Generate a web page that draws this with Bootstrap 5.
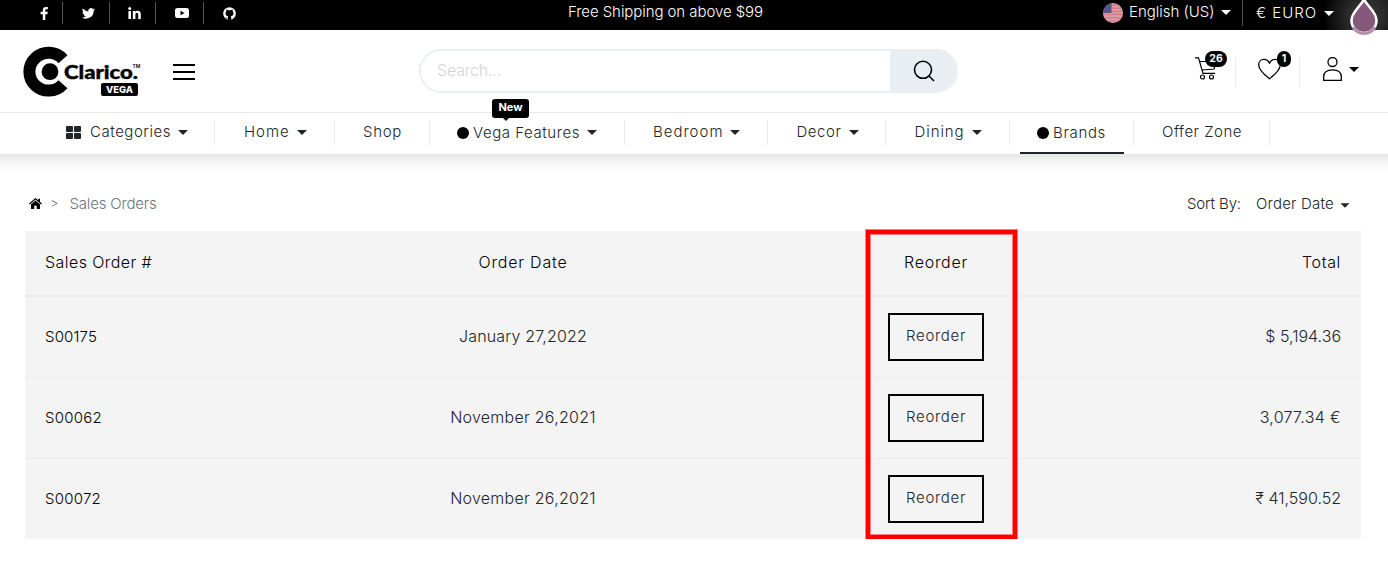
<!DOCTYPE html>
<html lang="en">
<head>
<meta charset="utf-8">
<meta name="viewport" content="width=device-width, initial-scale=1">
<title>Sales Orders | Clarico Vega</title>
<link href="https://cdn.jsdelivr.net/npm/bootstrap@5.3.0/dist/css/bootstrap.min.css" rel="stylesheet">
<style>
  body { font-family: Inter, "Noto Sans", sans-serif; font-size: 15px; font-weight: 300; color: #212529; overflow: hidden; }
  svg { display: block; flex: none; }
  a { color: inherit; text-decoration: none; }
  .t { white-space: nowrap; display: inline-block; }
  .caret { width: 0; height: 0; border: 4.5px solid transparent; border-width: 5px 5px 0; border-top-color: currentColor; flex: none; }

  /* Top bar */
  .top-bar { height: 30px; background: #000; color: #fff; position: relative; }
  .social { width: 568px; padding: 2px 0 0 26px; }
  .social a { height: 22px; display: flex; align-items: center; justify-content: center; border-right: 1px solid #555; }
  .social a:last-child { border: 0; }
  .s1 { width: 37px; } .s2 { width: 47px; } .s3 { width: 46px; } .s4 { width: 48px; } .s5 { width: 51px; }
  .promo { width: 535px; line-height: 24px; letter-spacing: -.07px; }
  .lang { width: 140px; height: 26px; border-right: 1px solid #555; }
  .drop-glow { position: absolute; right: 0; top: 0; width: 62px; height: 30px; background: radial-gradient(circle at 40px 16px, #3c3c3c 0, #2a2a2a 18px, rgba(0,0,0,0) 44px); }
  .drop { position: absolute; right: 9px; top: 0; z-index: 2; }

  /* Main header */
  .main-head { height: 82px; padding-left: 20px; }
  .burger { width: 22px; height: 16px; margin: 2px 224px 0 29px; border: solid #000; border-width: 2px 0; display: flex; align-items: center; }
  .burger::before { content: ""; height: 2px; width: 100%; background: #000; }
  .search { width: 539px; height: 44px; border: 2px solid #e9eef2; border-radius: 22px; overflow: hidden; }
  .search input { border: 0; width: 469px; padding: 0 0 2px 16px; font-size: 16px; font-weight: 300; letter-spacing: -.19px; outline: 0; color: #212529; }
  .search input::placeholder { color: #d2d5d8; opacity: 1; }
  .search button { border: 0; flex: 1; background: #e9eef2; padding: 0 0 0 23px; }
  .tool { height: 30px; position: relative; margin-top: 2px; }
  .tool-sep { border-right: 1px solid #e9ecef; }
  .count { position: absolute; top: -6px; height: 16px; border-radius: 8px; background: #000; color: #fff; font: 700 10.5px/15px Inter, sans-serif; text-align: center; }

  /* Navigation */
  .main-nav { height: 42px; border-top: 1px solid #e9eaeb; padding-left: 38px; position: relative; }
  .main-nav::after { content: ""; position: absolute; left: 0; right: 0; top: 100%; height: 20px; background: linear-gradient(#e6e6e6, #f1f1f1 30%, #fbfbfb 70%, #fff); }
  .main-nav a { height: 25px; margin-top: 7px; padding: 0 0 1px 28px; display: flex; align-items: center; border-right: 1px solid #e6e7e8; position: relative; }
  .main-nav .caret { margin-left: 7px; }
  .dot { width: 12px; height: 12px; border-radius: 50%; background: #000; margin: 1px 4px 0 -1px; flex: none; }
  .low { padding-top: 2px; }
  .active-line::after { content: ""; position: absolute; left: 10px; right: 9px; top: 32px; height: 2px; background: #212529; }
  .new-tag { position: absolute; left: 62px; top: -21px; width: 37px; height: 19px; border-radius: 3px; background: #000; color: #fff; font: 700 11px/17px Inter, sans-serif; text-align: center; z-index: 2; }
  .new-tag::after { content: ""; position: absolute; left: 11px; top: 19px; border: 3px solid transparent; border-top-color: #000; border-bottom: 0; }

  /* Page content */
  .page { padding: 0 27px 0 25px; }
  .crumbs { height: 77px; padding: 22px 11px 0 4px; }
  .muted { color: #6c757d; }
  .orders { position: relative; }
  .order-table { table-layout: fixed; width: 1336px; border-collapse: separate; border-spacing: 0; background: #f4f4f4; font-size: 16px; }
  .order-table th { font-weight: 300; color: #000; height: 66px; padding: 0 20px 3px; border-bottom: 2px solid #ebebeb; }
  .order-table td { height: 81px; padding: 0 20px 2px; border-bottom: 1px solid #ebebeb; }
  .order-table td.act { padding: 0; }
  .order-table tr:last-child td { border-bottom: 0; height: 80px; }
  .num { font-size: 15px; color: #000; }
  .reorder { width: 96px; height: 48px; border: 2px solid #000; border-radius: 0; padding: 0 0 2px; font-size: 15px; font-weight: 300; color: #212529; letter-spacing: .69px; display: block; margin: 0 auto; }
  .highlight { position: absolute; left: 841px; top: -1px; width: 151px; height: 309px; border: 4px solid #f00; box-shadow: 0 0 0 1px #ff7d7d, inset 0 0 0 1px #ff7d7d; pointer-events: none; }
</style>
</head>
<body>

<div class="top-bar d-flex align-items-start">
  <div class="social d-flex">
    <a href="#" class="s1" aria-label="Facebook"><svg width="8" height="13" viewBox="0 0 8 13"><path fill="#fff" d="M7.800.1v2.100H6.500c-1 0-1.200.5-1.200 1.200v1.400h2.400l-.3 2.400H5.300V13H2.800V7.200H.6V4.800h2.200V3C2.800 1 4 0 5.900 0c.9 0 1.600 0 1.900.1z"/></svg></a>
    <a href="#" class="s2 ps-1" aria-label="Twitter"><svg width="13" height="11" viewBox="0 0 24 20"><path fill="#fff" d="M24 2.400a10 10 0 0 1-2.800.8A5 5 0 0 0 23.300.4a10 10 0 0 1-3.100 1.200 4.900 4.900 0 0 0-8.400 4.500A14 14 0 0 1 1.700.9a4.900 4.900 0 0 0 1.500 6.600A5 5 0 0 1 1 6.900a4.900 4.900 0 0 0 3.900 4.900 5 5 0 0 1-2.200.1 4.900 4.900 0 0 0 4.600 3.400A9.900 9.900 0 0 1 0 17.300 14 14 0 0 0 21.500 4.900 10 10 0 0 0 24 2.400z"/></svg></a>
    <a href="#" class="s3 ps-1" aria-label="LinkedIn"><svg width="13" height="12" viewBox="0 0 13 12"><g fill="#fff"><circle cx="1.700" cy="1.500" r="1.500"/><path d="M.4 3.900H3V12H.4zM4.800 3.900h2.600V5c.5-.8 1.300-1.300 2.400-1.300 2.100 0 3 1.300 3 3.600V12h-2.600V7.700c0-1.200-.4-1.900-1.300-1.900-1 0-1.500.7-1.500 1.900V12H4.800z"/></g></svg></a>
    <a href="#" class="s4 ps-1" aria-label="YouTube"><svg width="14" height="10" viewBox="0 0 14 10"><rect width="14" height="10" rx="2.500" fill="#fff"/><path d="M5.500 2.700 9.600 5 5.500 7.300z"/></svg></a>
    <a href="#" class="s5" aria-label="GitHub"><svg width="13" height="13" viewBox="0 0 16 16"><circle cx="8" cy="8" r="7.800" fill="#fff"/><path d="M4.200 3.200c.9 0 1.500.3 2.200.8 1-.2 2.200-.2 3.200 0 .7-.5 1.300-.8 2.200-.8.3.7.3 1.300.1 2 .7.7 1 1.500 1 2.500 0 2.500-1.500 3.400-3.500 3.600.5.400.7 1 .7 1.700V16H6v-2c-1.700.3-2.300-.4-2.800-1.600.8.200 1.200 1 2.100.8l.7-.1c0-.8.200-1.400.6-1.800-2-.2-3.500-1.100-3.500-3.600 0-1 .3-1.800 1-2.500-.2-.7-.2-1.300.1-2z"/></svg></a>
  </div>
  <div class="promo t">Free Shipping on above $99</div>
  <a href="#" class="lang d-flex align-items-center">
    <svg width="20" height="20" viewBox="0 0 20 20"><defs><clipPath id="flag"><circle cx="10" cy="10" r="10"/></clipPath></defs><g clip-path="url(#flag)"><rect width="20" height="20" fill="#dda0a8"/><path stroke="#d27d88" stroke-width="1.500" d="M0 2h20M0 5.200h20M0 8.400h20M0 11.600h20M0 14.800h20M0 18h20"/><rect width="8.500" height="10" fill="#555587"/></g></svg>
    <span class="t" style="margin:-2px 6px 0 6px">English (US)</span><span class="caret" style="margin-top:-1px"></span>
  </a>
  <a href="#" class="d-flex align-items-center position-relative z-1" style="height:26px;padding-left:13px"><span class="t" style="letter-spacing:.97px;margin-right:7px">€ EURO</span><span class="caret"></span></a>
  <div class="drop-glow"></div>
  <svg class="drop" width="30" height="35" viewBox="0 0 30 35"><path d="M15-.5C11 7 2.500 12 2.500 20.500a12.500 12.500 0 0 0 25 0C27.500 12 19 7 15-.5z" fill="#85597b" stroke="#fff" stroke-width="2.600"/><path d="M4 27a12.500 12.500 0 0 0 22 0" fill="none" stroke="#b08fa9" stroke-width="2.700"/></svg>
</div>

<header class="main-head d-flex align-items-center">
  <a href="#" style="margin-top:2px" aria-label="Clarico Vega"><svg width="124" height="56" viewBox="20 44 124 56">
    <path d="M63 59.200A19.200 18.900 0 1 0 63 84.200" fill="none" stroke="#000" stroke-width="12"/>
    <circle cx="50" cy="71.700" r="8.400"/>
    <text x="64" y="79" textLength="74" lengthAdjust="spacingAndGlyphs" font-family="Lato" font-weight="900" font-size="18.500" stroke="#000" stroke-width=".4">Clarico.</text>
    <text x="132.500" y="67.500" font-family="Inter" font-weight="600" font-size="5">TM</text>
    <rect x="101" y="83" width="37" height="13" rx="2"/>
    <text x="106" y="93" textLength="27" lengthAdjust="spacingAndGlyphs" font-family="Inter" font-weight="800" font-size="9.500" fill="#fff">VEGA</text>
  </svg></a>
  <a href="#" class="burger" style="margin-left:29px" aria-label="Menu"></a>
  <form class="search d-flex"><input type="text" placeholder="Search..."><button type="button" aria-label="Search"><svg width="22" height="22" viewBox="0 0 22 22" fill="none" stroke="#000" stroke-width="1.600"><circle cx="10" cy="9.800" r="8.500"/><path d="m16 16 5 5"/></svg></button></form>
  <div class="tool tool-sep" style="width:41px;margin-left:237px">
    <svg width="24" height="26" viewBox="0 0 24 26" fill="none" stroke="#000" stroke-width="1.200"><path d="M0 .9h3.500L8 16.400h12M5 4.500h16.500L19 12 7 13"/><circle cx="7.500" cy="20" r="2"/><circle cx="16.500" cy="20" r="2"/></svg>
    <span class="count" style="left:10px;width:22px">26</span>
  </div>
  <div class="tool tool-sep" style="width:64px;padding:1px 0 0 21px">
    <svg width="26" height="24" viewBox="0 0 26 24" fill="none" stroke="#000" stroke-width="1.300"><path d="M12.500 20.800C7 16.500 1.700 12 1.700 6.700 1.700 3.500 4 1.400 6.800 1.400c2.500 0 4.500 1.300 5.700 3.700 1.200-2.400 3.200-3.700 5.700-3.700 2.800 0 5.100 2.100 5.100 5.300 0 5.300-5.300 9.800-10.800 14.100z"/></svg>
    <span class="count" style="left:41px;width:14px">1</span>
  </div>
  <a href="#" class="tool d-flex" style="padding-left:21.500px"><svg width="21" height="26" viewBox="0 0 21 26" fill="none" stroke="#000" stroke-width="1.300"><circle cx="10.500" cy="5" r="4.500"/><path d="M1.700 23.300v-3.500c0-4.500 3.500-7 8.800-7s8.800 2.500 8.800 7v3.500z"/></svg><span class="caret" style="margin:10px 0 0 6px;color:#000"></span></a>
</header>

<nav class="main-nav d-flex">
  <a href="#" style="width:177px"><svg width="15" height="13" viewBox="0 0 15 13" fill="#212529"><rect width="7" height="6" rx="1"/><rect x="8" width="7" height="6" rx="1"/><rect y="7" width="7" height="6" rx="1"/><rect x="8" y="7" width="7" height="6" rx="1"/></svg><span class="t" style="margin-left:9px;letter-spacing:.54px">Categories</span><span class="caret"></span></a>
  <a href="#" style="width:120px"><span class="t" style="margin-left:1px;letter-spacing:1px">Home</span><span class="caret"></span></a>
  <a href="#" style="width:95px"><span class="t" style="letter-spacing:.69px">Shop</span></a>
  <a href="#" style="width:195px"><span class="new-tag">New</span><span class="dot"></span><span class="t low" style="letter-spacing:.56px">Vega Features</span><span class="caret"></span></a>
  <a href="#" style="width:143px"><span class="t" style="letter-spacing:1px">Bedroom</span><span class="caret"></span></a>
  <a href="#" style="width:118px"><span class="t" style="margin-left:.5px;letter-spacing:.57px">Decor</span><span class="caret"></span></a>
  <a href="#" style="width:124px"><span class="t" style="margin-left:.5px;letter-spacing:.92px">Dining</span><span class="caret"></span></a>
  <a href="#" class="active-line" style="width:124px"><span class="dot"></span><span class="t low" style="letter-spacing:.67px">Brands</span></a>
  <a href="#" style="width:136px"><span class="t" style="letter-spacing:.5px">Offer Zone</span></a>
</nav>

<main class="page">
  <div class="crumbs d-flex justify-content-between">
    <div class="d-flex align-items-center" style="height:56px">
      <svg style="margin-top:-1px" width="13" height="11" viewBox="0 0 13 11"><path d="M6.500 0 0 5.500l.8.9 5.700-4.800 5.700 4.800.8-.9-2-1.700V.7H9.300v1.600z"/><path d="M6.500 2.500 2 6.300V11h3.300V7.700h2.400V11H11V6.300z"/></svg>
      <span class="muted" style="font-size:13px;margin:0 11px 0 8px">&gt;</span>
      <span class="t muted" style="letter-spacing:-.19px">Sales Orders</span>
    </div>
    <div class="d-flex align-items-center" style="height:56px">
      <span class="t" style="letter-spacing:-.13px;margin-right:15px">Sort By:</span>
      <span class="t" style="letter-spacing:.21px">Order Date</span><span class="caret" style="margin-left:6px;transform:translateY(1px) scale(.9)"></span>
    </div>
  </div>

  <div class="orders">
    <table class="order-table align-middle">
      <colgroup><col style="width:280px"><col style="width:436px"><col style="width:390px"><col></colgroup>
      <thead><tr>
        <th><span class="t" style="letter-spacing:.43px">Sales Order #</span></th>
        <th class="text-center"><span class="t" style="letter-spacing:.8px">Order Date</span></th>
        <th class="text-center"><span class="t" style="letter-spacing:.74px">Reorder</span></th>
        <th class="text-end"><span class="t" style="letter-spacing:.64px">Total</span></th>
      </tr></thead>
      <tbody>
        <tr><td><a href="#" class="t num" style="letter-spacing:.16px">S00175</a></td><td class="text-center"><span class="t" style="letter-spacing:.17px">January 27,2022</span></td><td class="act"><button class="btn reorder">Reorder</button></td><td class="text-end"><span class="t">$ 5,194.36</span></td></tr>
        <tr><td><a href="#" class="t num" style="letter-spacing:.25px">S00062</a></td><td class="text-center"><span class="t" style="letter-spacing:.26px">November 26,2021</span></td><td class="act"><button class="btn reorder">Reorder</button></td><td class="text-end"><span class="t" style="letter-spacing:.3px">3,077.34 €</span></td></tr>
        <tr><td><a href="#" class="t num" style="letter-spacing:.25px">S00072</a></td><td class="text-center"><span class="t" style="letter-spacing:.26px">November 26,2021</span></td><td class="act"><button class="btn reorder">Reorder</button></td><td class="text-end"><span class="t">₹ 41,590.52</span></td></tr>
      </tbody>
    </table>
    <div class="highlight"></div>
  </div>
</main>

<script src="https://cdn.jsdelivr.net/npm/bootstrap@5.3.0/dist/js/bootstrap.bundle.min.js"></script>
</body>
</html>
